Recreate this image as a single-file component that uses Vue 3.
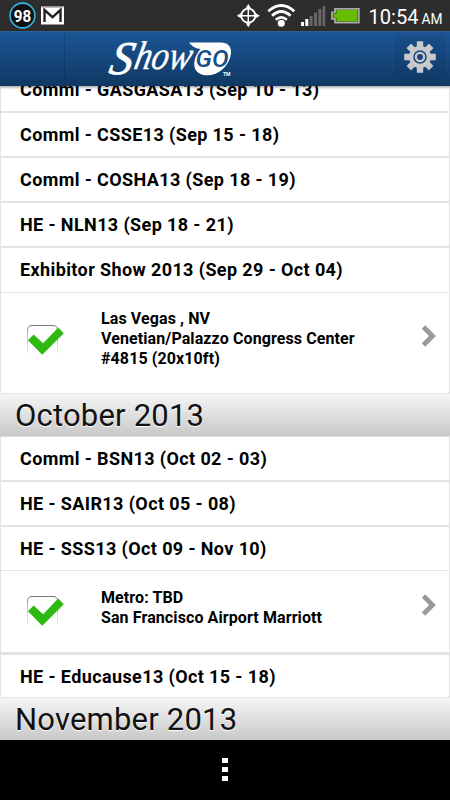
<script setup>
import { ref } from 'vue';

const months = ref([
  {
    id: 9,
    title: '',
    shows: [
      { id: 1, name: 'Comml - GASGASA13 (Sep 10 - 13)', details: [] },
      { id: 2, name: 'Comml - CSSE13 (Sep 15 - 18)', details: [] },
      { id: 3, name: 'Comml - COSHA13 (Sep 18 - 19)', details: [] },
      { id: 4, name: 'HE - NLN13 (Sep 18 - 21)', details: [] },
      {
        id: 5,
        name: 'Exhibitor Show 2013 (Sep 29 - Oct 04)',
        details: ['Las Vegas , NV', 'Venetian/Palazzo Congress Center', '#4815 (20x10ft)']
      }
    ]
  },
  {
    id: 10,
    title: 'October 2013',
    shows: [
      { id: 6, name: 'Comml - BSN13 (Oct 02 - 03)', details: [] },
      { id: 7, name: 'HE - SAIR13 (Oct 05 - 08)', details: [] },
      {
        id: 8,
        name: 'HE - SSS13 (Oct 09 - Nov 10)',
        details: ['Metro: TBD', 'San Francisco Airport Marriott']
      },
      { id: 9, name: 'HE - Educause13 (Oct 15 - 18)', details: [] }
    ]
  },
  {
    id: 11,
    title: 'November 2013',
    shows: []
  }
]);

const openShows = ref([5, 8]);

function toggleShow(show) {
  if (show.details.length === 0) {
    return;
  }
  if (openShows.value.includes(show.id)) {
    openShows.value = openShows.value.filter((id) => id !== show.id);
  } else {
    openShows.value.push(show.id);
  }
}
</script>

<template>
  <div class="phone">
    <div class="statusBar">
      <svg width="70" height="31" viewBox="0 0 70 31">
        <circle cx="22.5" cy="15.5" r="12.4" fill="#111" stroke="#35b5e5" stroke-width="1.6" />
        <text x="13.7" y="21.5" class="badgeText" textLength="17.5" lengthAdjust="spacingAndGlyphs">98</text>
        <rect x="41" y="6.5" width="23" height="18" fill="#fff" />
        <path d="M44.5 22V10l8 7.2 8-7.2v12" fill="none" stroke="#222" stroke-width="2.4" />
        <path d="M42 7.5h21" stroke="#bbb" stroke-width="1" />
      </svg>
      <svg width="215" height="31" viewBox="0 0 215 31">
        <g fill="none" stroke="#fff">
          <circle cx="13.3" cy="15.7" r="7" stroke-width="1.8" />
          <path d="M13.3 6v19.4M3.6 15.7H23" stroke-width="1.5" />
        </g>
        <path
          d="M13.3 4l2.5 4h-5zM13.3 27.3l2.5-4h-5zM1.8 15.7l4-2.5v5zM24.8 15.7l-4-2.5v5z"
          fill="#fff"
        />
        <g fill="none" stroke="#fff" stroke-width="2.7">
          <path d="M33.3 11.2Q46.3-.2 59.3 11.2" />
          <path d="M37 15.7Q46.3 7.3 55.6 15.7" />
          <path d="M40.8 19.8Q46.3 15 51.8 19.8" />
        </g>
        <circle cx="46.3" cy="23.3" r="3.5" fill="#fff" />
        <path d="M66 22h3v4h-3zM70.3 19h3v7h-3z" fill="#fff" />
        <path d="M74.6 16h3v10h-3zM79 12.5h3V26h-3zM83.3 9h3v17h-3zM87.5 6h2.7v20h-2.7z" fill="#676767" />
        <path d="M100 8.8h23.8v13.7H100v-3.6h-3v-6.5h3z" fill="#283b0c" stroke="#aaa" stroke-width="1.8" />
        <path d="M101.5 10h21v11.2h-21v-3.5h-3v-4h3z" fill="#68bd00" />
        <text x="133.5" y="23.5" class="clock" textLength="50" lengthAdjust="spacingAndGlyphs">10:54</text>
        <text x="186.500" y="23.5" class="clockHalf" textLength="21" lengthAdjust="spacingAndGlyphs">AM</text>
      </svg>
    </div>

    <header class="topBar">
      <div class="backSlot"></div>
      <svg class="logo" width="130" height="48" viewBox="0 0 130 48">
        <g transform="skewX(-12)">
          <text x="14" y="39" class="logoS" textLength="23" lengthAdjust="spacingAndGlyphs">S</text>
          <text x="38" y="34" class="logoText" textLength="57" lengthAdjust="spacingAndGlyphs">how</text>
        </g>
        <path
          d="M87 7.500h32c6.500 0 10.500 4 10 10.500-.8 10.500-9.500 20-20 22-8.500 1.500-15.500-2-16.500-8.500-1-6 1.500-12 6-17.500-4-.5-8-2-11.500-6.500z"
          fill="#fff"
        />
        <text x="93.500" y="32" class="logoGo" textLength="33" lengthAdjust="spacingAndGlyphs">GO</text>
      </svg>
      <span class="tm">TM</span>
      <button type="button" class="settingsBtn" aria-label="Settings">
        <svg width="34" height="34" viewBox="-17 -17 34 34">
          <g fill="#c9c9cb">
            <rect
              v-for="n in 8"
              :key="n"
              x="-3.2"
              y="-15.8"
              width="6.4"
              height="7"
              rx="0.5"
              :transform="`rotate(${n * 45})`"
            />
          </g>
          <circle r="8.9" fill="none" stroke="#c9c9cb" stroke-width="4.3" />
          <circle r="4.1" fill="none" stroke="#c9c9cb" stroke-width="2.3" />
        </svg>
      </button>
    </header>

    <main class="showList">
      <section v-for="month in months" :key="month.id" class="month" :class="{ scrolled: !month.title }">
        <h2 v-if="month.title" class="monthTitle">{{ month.title }}</h2>
        <div v-for="show in month.shows" :key="show.id" class="show">
          <div class="showName" @click="toggleShow(show)">{{ show.name }}</div>
          <div v-if="openShows.includes(show.id)" class="showDetail">
            <svg class="check" width="40" height="34" viewBox="0 0 40 34">
              <defs>
                <linearGradient id="boxFade" x1="0" y1="0" x2="0" y2="1">
                  <stop offset="0" stop-color="#777" />
                  <stop offset="0.3" stop-color="#bbb" />
                  <stop offset="1" stop-color="#eee" />
                </linearGradient>
              </defs>
              <path d="M2.5 30V7Q2.5 2.5 7 2.5H28Q32.500 2.5 32.500 7V30" class="checkBox" />
              <path d="M2.900 17.300l5.700-5.700 9.500 8.700L33.200 4.500l5.600 5.700-21.500 21.600z" fill="#2fb913" />
            </svg>
            <div class="place">
              <div v-for="line in show.details" :key="line">{{ line }}</div>
            </div>
            <svg class="arrow" width="16" height="22" viewBox="0 0 16 22">
              <path d="M2.500 2l9 9-9 9" fill="none" stroke="#999" stroke-width="4.800" />
            </svg>
          </div>
        </div>
      </section>
    </main>

    <footer class="menuBar">
      <span class="dot"></span>
      <span class="dot"></span>
      <span class="dot"></span>
    </footer>
  </div>
</template>

<style>
body {
  margin: 0;
  background-color: #000;
}
</style>

<style scoped>
.phone {
  display: flex;
  flex-direction: column;
  width: 450px;
  height: 800px;
  overflow: hidden;
  font-family: Roboto, "Liberation Sans", sans-serif;
  background-color: #fff;
}
.statusBar {
  display: flex;
  flex: none;
  justify-content: space-between;
  box-sizing: border-box;
  height: 31px;
  background-color: #2d2d2d;
  border-bottom: 1px solid #38301f;
}
.statusBar svg {
  display: block;
}
.badgeText {
  font-size: 16.5px;
  font-weight: 700;
  fill: #fff;
}
.clock {
  font-size: 21px;
  fill: #fff;
}
.clockHalf {
  font-size: 15px;
  fill: #fff;
}
.topBar {
  display: flex;
  flex: none;
  box-sizing: border-box;
  width: 450px;
  height: 55px;
  background: linear-gradient(#1b5596, #103863);
  border-top: 1px solid #29619f;
  box-shadow: 0 1px 3px rgba(0, 0, 0, 0.45);
  z-index: 1;
}
.backSlot {
  box-sizing: border-box;
  width: 65px;
  border-right: 1px solid rgba(10, 40, 80, 0.35);
}
.logo {
  margin: 3px 0 0 37px;
  overflow: visible;
}
.logoS {
  font-family: "Liberation Serif", serif;
  font-size: 47px;
  font-style: italic;
  fill: #fff;
  stroke: #fff;
  stroke-width: 0.8;
}
.logoText {
  font-family: "Liberation Serif", serif;
  font-size: 40px;
  font-style: italic;
  fill: #fff;
  stroke: #fff;
  stroke-width: 0.4;
}
.logoGo {
  font-size: 24px;
  font-weight: 500;
  font-style: italic;
  fill: #174c86;
}
.tm {
  width: 9px;
  margin: 39px 0 0 -9px;
  color: #fff;
  font-size: 5px;
  font-weight: 700;
  line-height: 6px;
}
.settingsBtn {
  display: flex;
  align-items: center;
  justify-content: center;
  width: 46px;
  height: 40px;
  margin: 5px 7px 0 auto;
  padding: 0;
  border: none;
  border-radius: 5px;
  background: linear-gradient(#184d88, #113c6b);
  box-shadow: 0 0 2px rgba(5, 30, 65, 0.5);
}
.showList {
  flex: none;
  height: 654px;
  overflow: hidden;
}
.scrolled {
  margin-top: -18px;
}
.showName {
  box-sizing: border-box;
  height: 45px;
  padding-left: 19px;
  border: solid #e3e3e3;
  border-width: 0 1px 2px;
  color: #000;
  font-size: 18px;
  font-weight: 700;
  letter-spacing: 0.39px;
  line-height: 43px;
  white-space: nowrap;
}
.show:last-child .showName {
  height: 43px;
  border-bottom-width: 1px;
}
.scrolled .show:last-child .showName {
  height: 45px;
  line-height: 44px;
}
.showName:has(+ .showDetail) {
  height: 44px;
  border-bottom-width: 1px;
}
.showDetail {
  display: flex;
  align-items: flex-start;
  box-sizing: border-box;
  height: 84px;
  padding: 17px 12px 0 24px;
  border: solid #e3e3e3;
  border-width: 0 1px 3px;
}
.scrolled .showDetail {
  height: 101px;
  padding-top: 16px;
  border-bottom-width: 1px;
}
.check {
  margin-top: 6px;
}
.scrolled .check {
  margin-top: 14px;
}
.checkBox {
  fill: none;
  stroke: url(#boxFade);
  stroke-width: 1;
}
.place {
  margin-left: 36px;
  color: #000;
  font-size: 16px;
  font-weight: 700;
  letter-spacing: 0.1px;
  line-height: 20px;
  white-space: nowrap;
}
.arrow {
  margin: 6px 0 0 auto;
}
.scrolled .arrow {
  margin-top: 16px;
}
.monthTitle {
  box-sizing: border-box;
  height: 43px;
  margin: 0;
  padding-left: 15px;
  background: linear-gradient(#f5f5f5, #c9c9c9);
  border-bottom: 1px solid #ddd;
  color: #111;
  font-size: 31px;
  font-weight: 400;
  letter-spacing: 0.2px;
  line-height: 43px;
  text-shadow: 0 1px 1px #fff;
}
.menuBar {
  display: flex;
  flex: 1;
  flex-direction: column;
  align-items: center;
  gap: 4px;
  padding-top: 18px;
  background-color: #000;
}
.dot {
  width: 6px;
  height: 5px;
  background-color: #fff;
}
</style>
